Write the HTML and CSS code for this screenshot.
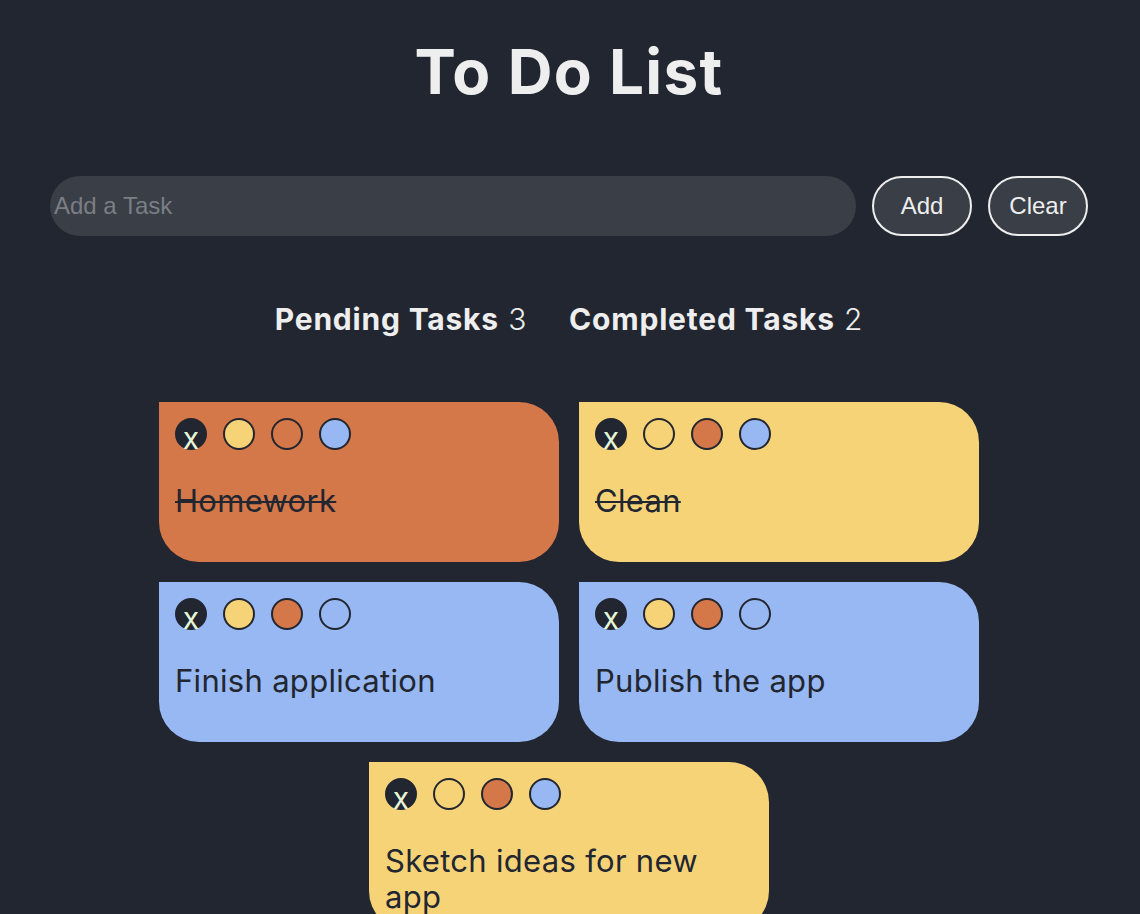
FILE: index.html
```html
<!DOCTYPE html>
<html lang="en">
<head>
<meta charset="utf-8">
<title>To Do List</title>
<link rel="stylesheet" href="styles.css">
</head>
<body>
<main class="app">
  <h1 class="title">To Do List</h1>
  <form class="add-form">
    <input class="task-input" type="text" placeholder="Add a Task">
    <button class="btn" type="button">Add</button>
    <button class="btn" type="button">Clear</button>
  </form>
  <div class="counters">
    <span class="counter"><b>Pending Tasks</b> 3</span>
    <span class="counter"><b>Completed Tasks</b> 2</span>
  </div>
  <section class="cards">
    <article class="card orange">
      <div class="dots">
        <span class="dot del">x</span>
        <span class="dot yellow"></span>
        <span class="dot orange"></span>
        <span class="dot blue"></span>
      </div>
      <p class="task done">Homework</p>
    </article>
    <article class="card yellow">
      <div class="dots">
        <span class="dot del">x</span>
        <span class="dot yellow"></span>
        <span class="dot orange"></span>
        <span class="dot blue"></span>
      </div>
      <p class="task done">Clean</p>
    </article>
    <article class="card blue">
      <div class="dots">
        <span class="dot del">x</span>
        <span class="dot yellow"></span>
        <span class="dot orange"></span>
        <span class="dot blue"></span>
      </div>
      <p class="task">Finish application</p>
    </article>
    <article class="card blue">
      <div class="dots">
        <span class="dot del">x</span>
        <span class="dot yellow"></span>
        <span class="dot orange"></span>
        <span class="dot blue"></span>
      </div>
      <p class="task">Publish the app</p>
    </article>
    <article class="card yellow">
      <div class="dots">
        <span class="dot del">x</span>
        <span class="dot yellow"></span>
        <span class="dot orange"></span>
        <span class="dot blue"></span>
      </div>
      <p class="task">Sketch ideas for new app</p>
    </article>
  </section>
</main>
</body>
</html>
```
FILE: styles.css
```css
* { box-sizing: border-box; }
html, body {
  margin: 0;
  background: #222630;
}
body {
  font-family: Inter, "Noto Sans", sans-serif;
  color: #eeeeee;
}
.app {
  width: 1038px;
  margin: 0 auto;
  position: relative;
  left: -1px;
}
.title {
  margin: 0;
  padding-top: 33px;
  height: 148px;
  text-align: center;
  font-size: 62px;
  font-weight: 700;
  line-height: 78px;
  letter-spacing: 1.3px;
}
.add-form {
  display: flex;
  gap: 16px;
  margin: 28px 0 0;
  height: 60px;
}
.task-input {
  flex: 1;
  height: 60px;
  border: none;
  border-radius: 30px;
  background: #3a3e47;
  padding: 0 4px;
  font-family: "Liberation Sans", Arial, sans-serif;
  font-size: 24px;
  color: #eee;
  outline: none;
}
.task-input::placeholder { color: #7b7e84; }
.btn {
  width: 100px;
  height: 60px;
  padding: 0;
  border: 2px solid #eeeeee;
  border-radius: 30px;
  background: #3a3e47;
  color: #eeeeee;
  font-family: "Liberation Sans", Arial, sans-serif;
  font-size: 24px;
}
.counters {
  display: flex;
  justify-content: center;
  gap: 42px;
  margin-top: 64px;
  font-size: 30px;
  line-height: 38px;
  letter-spacing: 0.8px;
}
.counter { font-weight: 300; }
.counter b { font-weight: 700; }
.cards {
  display: flex;
  flex-wrap: wrap;
  justify-content: center;
  gap: 20px;
  width: 820px;
  margin: 64px auto 0;
}
.card {
  width: 400px;
  min-height: 160px;
  padding: 16px;
  border-radius: 0 40px 40px 40px;
  color: #222630;
}
.card.orange { background: #d47749; }
.card.yellow { background: #f7d378; }
.card.blue { background: #97b8f2; }
.dots {
  display: flex;
  gap: 16px;
}
.dot {
  width: 32px;
  height: 32px;
  border-radius: 50%;
  border: 2px solid #222630;
}
.dot.yellow { background: #f7d378; }
.dot.orange { background: #d47749; }
.dot.blue { background: #97b8f2; }
.card.orange .dot.orange,
.card.yellow .dot.yellow,
.card.blue .dot.blue { background: transparent; }
.dot.del {
  display: block;
  background: #222630;
  color: #e6f6d6;
  font-family: Inter, "Noto Sans", sans-serif;
  font-size: 30px;
  line-height: 37px;
  text-align: center;
  overflow: visible;
}
.task {
  margin: 33px 0 0;
  font-size: 31px;
  line-height: 36px;
  letter-spacing: 0.3px;
  font-weight: 400;
}
.task.done { text-decoration: line-through; text-decoration-thickness: 2px; }
```
